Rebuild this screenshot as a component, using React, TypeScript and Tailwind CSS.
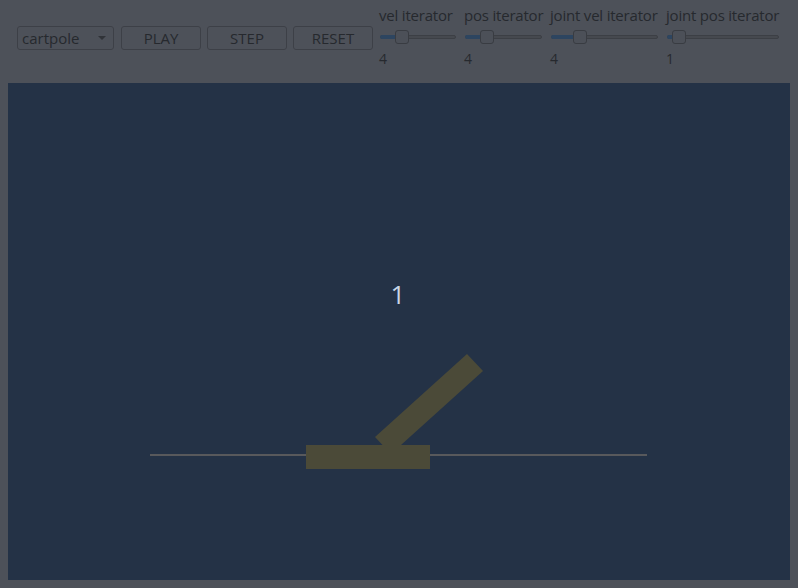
import React from 'react';

interface SliderProps {
  label: string;
  value: number;
  width: number;
  thumb: number;
}

const font = { fontFamily: '"Open Sans", "DejaVu Sans", sans-serif' };

const IterSlider: React.FC<SliderProps> = ({ label, value, width, thumb }) => {
  return (
    <div className="flex flex-col pt-[6px]" style={{ width }}>
      <span className="text-[15px] leading-[19px] text-[#26292e] whitespace-nowrap tracking-[-0.2px]">{label}</span>
      <div className="relative h-[14px] mt-[5px] mr-[8px] ml-[1px]">
        {/* track */}
        <div className="absolute left-0 right-0 top-[5px] h-[4px] rounded-full bg-[#46494f] border border-[#3c3f45]" />
        <div
          className="absolute left-0 top-[5px] h-[4px] rounded-full bg-[#2d4560]"
          style={{ width: thumb + 6 }}
        />
        <div
          className="absolute top-0 w-[14px] h-[14px] rounded-[3px] bg-[#4c5058] border border-[#393c42]"
          style={{ left: thumb }}
        />
      </div>
      <span className="text-[14px] leading-[16px] text-[#26292e] mt-[7px]">{value}</span>
    </div>
  );
};

const App: React.FC = () => {
  return (
    <div className="w-[798px] h-[588px] bg-[#4d5159] flex flex-col px-2 pb-2" style={font}>
      <div className="h-[83px] flex items-start pl-[9px] shrink-0">
        <div className="mt-[26px] w-[97px] h-[24px] rounded-[3px] border border-[#3d4047] flex items-center justify-between pl-[4px] pr-[7px] text-[15px] text-[#26292e]">
          <span>cartpole</span>
          <span className="w-0 h-0 border-l-[4px] border-r-[4px] border-t-[4px] border-l-transparent border-r-transparent border-t-[#303338]" />
        </div>
        <div className="flex gap-[6px] ml-[7px]">
          {['PLAY', 'STEP', 'RESET'].map((b) => (
            <button
              key={b}
              className="mt-[26px] w-[80px] h-[24px] rounded-[3px] border border-[#3d4047] text-[15px] leading-[20px] text-[#26292e] flex items-center justify-center pb-[1px]"
            >
              {b}
            </button>
          ))}
        </div>
        <div className="flex ml-[6px]">
          <IterSlider label="vel iterator" value={4} width={85} thumb={15} />
          <IterSlider label="pos iterator" value={4} width={86} thumb={15} />
          <IterSlider label="joint vel iterator" value={4} width={116} thumb={22} />
          <IterSlider label="joint pos iterator" value={1} width={121} thumb={5} />
        </div>
      </div>
      <div className="flex-1 bg-[#243246] relative">
        <svg width="782" height="497" viewBox="0 0 782 497" className="block">
          <text
            x="390"
            y="221"
            textAnchor="middle"
            fontSize="26"
            fill="#c7d6e6"
            fontFamily='"Open Sans", "DejaVu Sans", sans-serif'
          >
            1
          </text>
          <rect x="142" y="371" width="497" height="2" fill="#58595c" />
          <polygon points="367,354 459,271 475,288 383,371" fill="#4b4a38" />
          <rect x="298" y="362" width="124" height="24" fill="#4b4a38" />
        </svg>
      </div>
    </div>
  );
};

export default App;
